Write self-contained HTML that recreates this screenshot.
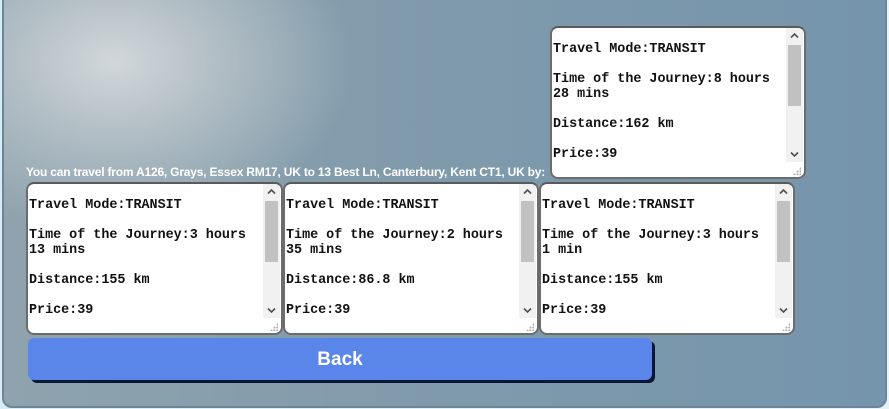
<!DOCTYPE html>
<html><head><style>
html,body{margin:0;padding:0;width:889px;height:409px;overflow:hidden}
body{background:linear-gradient(90deg,#d6ecf6,#e4f3fa);position:relative;font-family:"Liberation Sans",sans-serif}
.panel{position:absolute;left:2px;top:-10px;width:881px;height:414px;border-radius:10px;border:2px solid #6d8594;
background:radial-gradient(ellipse 240px 170px at 110px 70px,#d2d7da 0%,#b0bdc4 45%,rgba(150,170,180,0) 100%),linear-gradient(90deg,#8fa3ae 0%,#7f9aab 50%,#7595ad 100%);overflow:hidden}
.lbl{position:absolute;left:26px;top:165px;color:#fff;font-weight:bold;font-size:12px;letter-spacing:-0.2px}
.ta{position:absolute;box-sizing:border-box;border:2px solid #6c6c6c;border-top-color:#5a5a5a;border-radius:8px;background:#fff;overflow:hidden}
.tx{position:absolute;left:1px;top:14px;font-family:"Liberation Mono",monospace;font-weight:bold;font-size:13.4px;line-height:15px;color:#111;white-space:pre}
.sb{position:absolute;right:1px;top:0;width:17px;bottom:15px;background:#f1f1f1}
.th{position:absolute;left:2px;right:2px;top:17px;height:61px;background:#c1c1c1}
.up,.dn{position:absolute;left:0;width:17px;height:15px}
.up{top:0}.dn{bottom:0}
.gr{position:absolute;right:3px;bottom:2px;width:8px;height:8px;background:radial-gradient(circle,#aaa 1px,transparent 1.2px) 0 0/3px 3px;clip-path:polygon(100% 0,100% 100%,0 100%)}
.btn{position:absolute;left:28px;top:338px;width:624px;height:42px;background:#5a86ea;border-radius:6px;box-shadow:3px 3px 0 #0a1636;color:#fff;font-weight:bold;font-size:19px;text-align:center;line-height:44px}
</style></head><body>
<div class="panel"></div>
<div class="lbl">You can travel from A126, Grays, Essex RM17, UK to 13 Best Ln, Canterbury, Kent CT1, UK by:</div>
<svg width="0" height="0" style="position:absolute"><defs>
<symbol id="u" viewBox="0 0 17 15"><path d="M5 9.5L8.5 6L12 9.5" fill="none" stroke="#505050" stroke-width="1.6"/></symbol>
<symbol id="d" viewBox="0 0 17 15"><path d="M5 5.5L8.5 9L12 5.5" fill="none" stroke="#505050" stroke-width="1.6"/></symbol>
</defs></svg>
<div class="ta" style="left:550px;top:26px;width:256px;height:153px"><div class="tx">Travel Mode:TRANSIT

Time of the Journey:8 hours
28 mins

Distance:162 km

Price:39</div><div class="sb"><svg class="up"><use href="#u"/></svg><div class="th"></div><svg class="dn"><use href="#d"/></svg></div><div class="gr"></div></div>
<div class="ta" style="left:26px;top:182px;width:257px;height:153px"><div class="tx">Travel Mode:TRANSIT

Time of the Journey:3 hours
13 mins

Distance:155 km

Price:39</div><div class="sb"><svg class="up"><use href="#u"/></svg><div class="th"></div><svg class="dn"><use href="#d"/></svg></div><div class="gr"></div></div>
<div class="ta" style="left:283px;top:182px;width:256px;height:153px"><div class="tx">Travel Mode:TRANSIT

Time of the Journey:2 hours
35 mins

Distance:86.8 km

Price:39</div><div class="sb"><svg class="up"><use href="#u"/></svg><div class="th"></div><svg class="dn"><use href="#d"/></svg></div><div class="gr"></div></div>
<div class="ta" style="left:539px;top:182px;width:256px;height:153px"><div class="tx">Travel Mode:TRANSIT

Time of the Journey:3 hours
1 min

Distance:155 km

Price:39</div><div class="sb"><svg class="up"><use href="#u"/></svg><div class="th"></div><svg class="dn"><use href="#d"/></svg></div><div class="gr"></div></div>
<div class="btn">Back</div>
</body></html>
